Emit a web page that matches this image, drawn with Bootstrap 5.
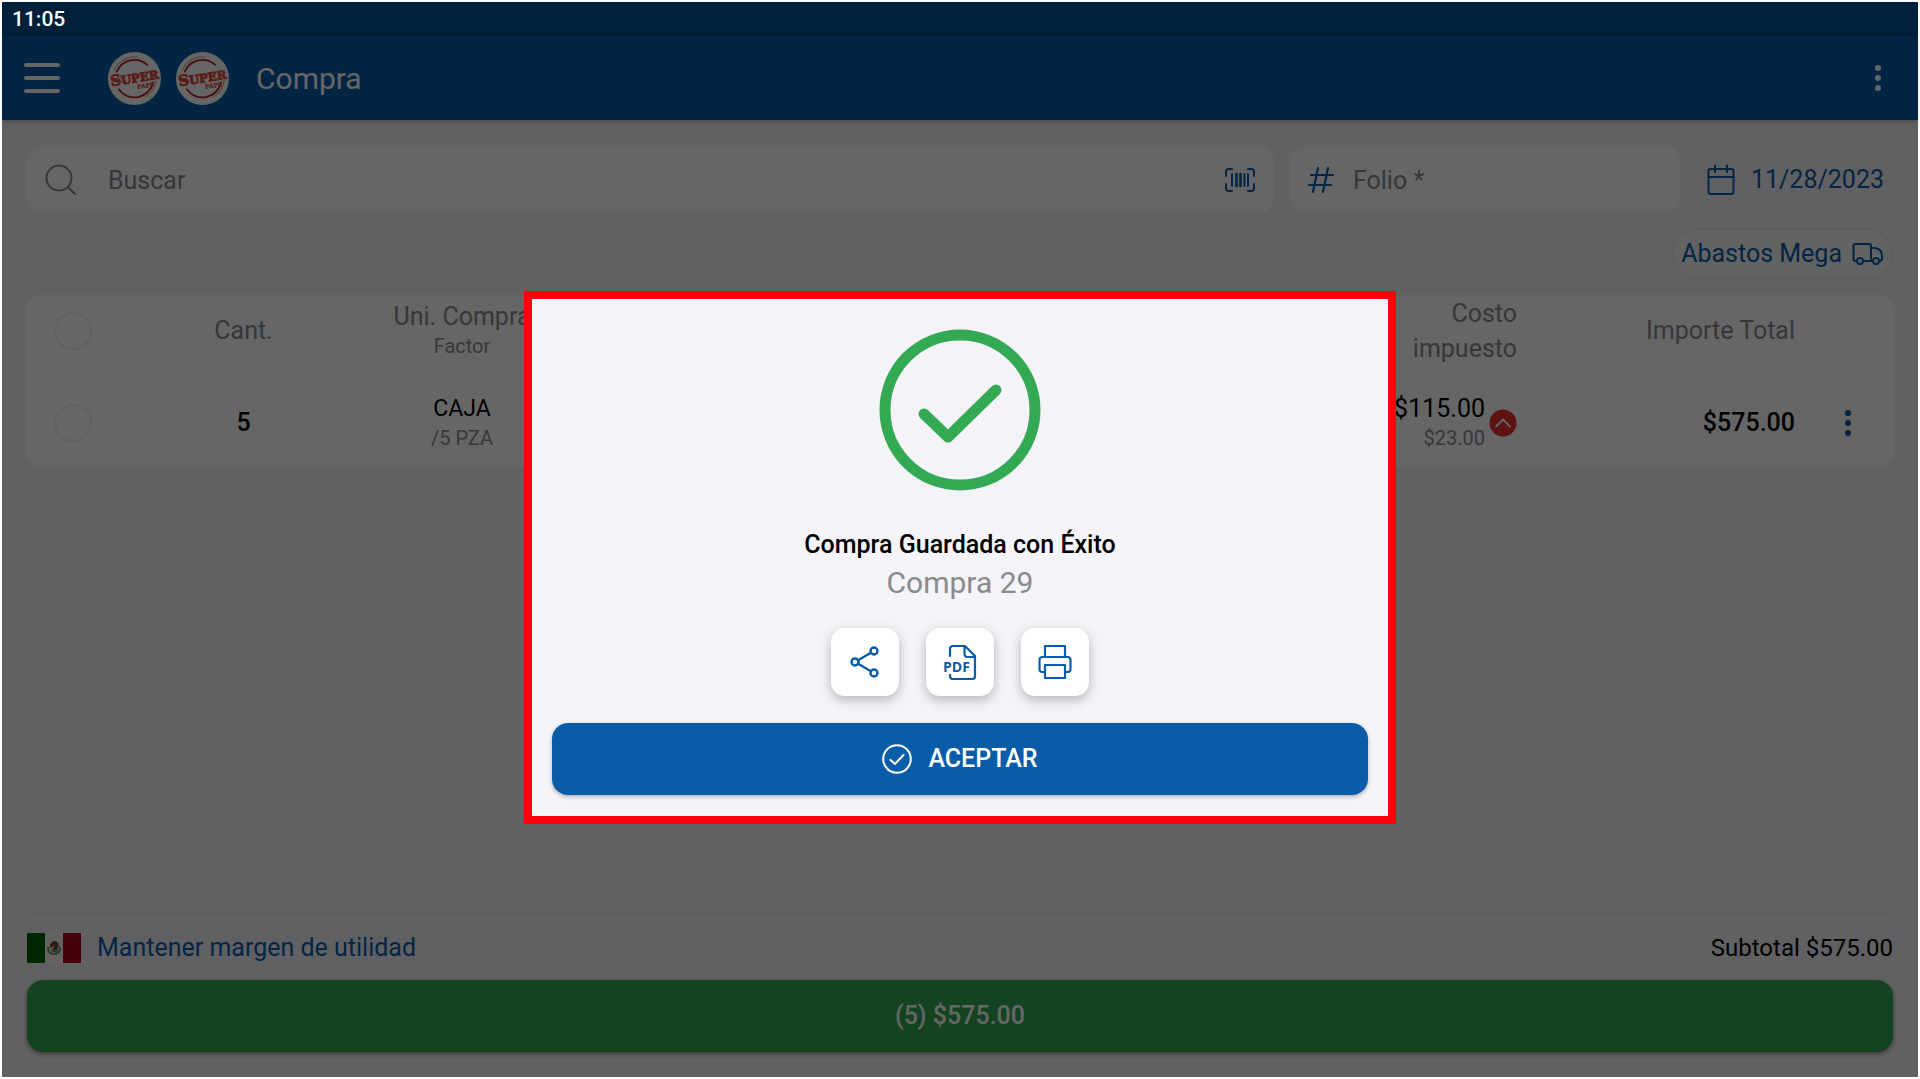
<!DOCTYPE html>
<html lang="es">
<head>
<meta charset="utf-8">
<meta name="viewport" content="width=device-width, initial-scale=1">
<title>Compra</title>
<link href="https://cdn.jsdelivr.net/npm/bootstrap@5.3.0/dist/css/bootstrap.min.css" rel="stylesheet">
<style>
  :root { --brand: #085ca8; --muted: #8a8a8e; --ok: #34a953; }
  body { font-family: Roboto, "Liberation Sans", sans-serif; font-size: 25px; line-height: 30px; padding: 2px; background: #fff; color: #000; }
  .screen { min-height: calc(100vh - 4px); background: #f3f3f8; overflow: hidden; }
  .statusbar { height: 34px; background: #005091; padding-left: 10px; }
  .clock { z-index: 1060; color: #fff; font-size: 21px; font-weight: 500; line-height: 34px; }
  .topbar { height: 84px; background: var(--brand); color: #fff; padding: 0 24px 0 22px; box-shadow: 0 1px 4px rgba(0,0,0,.3); }
  .topbar h1 { font-size: 30px; font-weight: 400; line-height: 36px; padding: 2px 0 0 27px; }
  .plain { border: 0; background: none; padding: 0; color: inherit; display: flex; }
  .logos { padding-left: 48px; gap: 15px; }
  .main-area { padding: 27px 25px 25px; }
  .brand { color: var(--brand); }
  .muted { color: var(--muted); }
  .field { height: 65px; background: #fff; border-radius: 14px; }
  .field-search { padding: 0 18px; gap: 31px; }
  .field-folio { flex: 0 0 390px; padding: 0 17px; gap: 18px; }
  .field input { border: 0; background: transparent; padding: 2px 0 0; width: 0; min-width: 0; outline: 0; }
  .field input::placeholder { color: var(--muted); opacity: 1; }
  .date { gap: 16px; padding: 0 9px 0 11px; }
  .supplier { height: 51px; background: #f7f7fa; border: 2px solid #ececf0; border-radius: 26px; padding: 0 7px; gap: 10px; }
  .items { background: #fff; border-radius: 14px; overflow: hidden; margin-top: 16px; }
  .items table { table-layout: fixed; width: 100%; }
  .items th { font-weight: 400; color: var(--muted); height: 72px; padding: 0; }
  .items td { height: 100px; padding: 12px 0 0; }
  .items .sub { display: block; font-size: 20px; line-height: 28px; color: var(--muted); }
  .items .tax { line-height: 35px; }
  .items .unit { font-size: 23px; }
  .strong { font-weight: 500; }
  .c-check { width: 92px; } .c-qty { width: 249px; } .c-unit { width: 188px; }
  .c-total { width: 278px; } .c-menu { width: 98px; }
  .items .menu-cell { padding-left: 8px; }
  .items .form-check-input { width: 38px; height: 38px; margin: 0; border: 2px solid #f0f0f2; border-radius: 50%; float: none; vertical-align: middle; }
  .footbar { border-top: 2px solid #e9e9ed; padding-top: 18px; }
  .subtotal { font-size: 24px; }
  .btn-pay, .btn-accept { height: 72px; border-radius: 16px; font-size: 25px; font-weight: 500; line-height: 30px; color: #fff; border: 0; }
  .btn-pay { background: var(--ok); margin-top: 17px; box-shadow: 0 2px 5px rgba(0,0,0,.4); }
  .shade { background: #000; opacity: .6; z-index: 1050; }
  .modal { --bs-modal-width: 872px; position: absolute; top: 36px; height: auto; bottom: 0; }
  .modal .modal-dialog { min-height: 100%; margin-top: 0; margin-bottom: 0; }
  .modal-content { background: #f3f3f8; border: 8px solid #ff000c; border-radius: 0; padding: 30px 20px 21px; }
  .modal-content h2 { font-size: 25px; font-weight: 500; line-height: 36px; margin: 36px 0 0; color: #000; }
  .order { font-size: 30px; line-height: 36px; margin: 2px 0 27px; }
  .actions { gap: 27px; margin-bottom: 27px; }
  .btn-tile { width: 68px; height: 68px; border-radius: 14px; background: #fff; color: var(--brand); box-shadow: 0 4px 12px rgba(0,0,0,.25); padding: 0; border: 0; }
  .btn-accept { background: var(--brand); gap: 16px; box-shadow: 0 2px 4px rgba(0,0,0,.25); }
  .btn-tile:hover { background: #fff; color: var(--brand); }
  svg { display: block; flex: none; }
  .ln { fill: none; stroke: currentColor; stroke-linecap: round; stroke-linejoin: round; }
</style>
<script src="https://cdn.jsdelivr.net/npm/bootstrap@5.3.0/dist/js/bootstrap.bundle.min.js"></script>
</head>
<body>
<div class="screen position-relative d-flex flex-column">
  <div class="statusbar"><span class="clock position-relative">11:05</span></div>

  <header class="topbar d-flex align-items-center">
    <button class="plain" type="button" aria-label="Menú">
      <svg class="ln" width="36" height="32" viewBox="0 0 36 32" stroke-width="4"><path d="M2 3H34M2 16H34M2 29H34"/></svg>
    </button>
    <div class="logos d-flex">
      <svg width="53" height="53" viewBox="0 0 54 54">
        <g id="logo">
          <circle cx="27" cy="27" r="27" fill="#fff"/>
          <g fill="none" stroke-linecap="round">
            <path d="M9 20A19.500 19.500 0 0 1 40 13M46 31A19.500 19.500 0 0 1 11 38" stroke="#b3201f" stroke-width="1.800"/>
            <path d="M6 19A22.500 22.500 0 0 1 30 5M49 29A22.500 22.500 0 0 1 38 46" stroke="#e08a7c" stroke-width="1"/>
          </g>
          <g transform="rotate(-9 27 27)" font-family="'DejaVu Serif',serif" font-weight="700" fill="#dc4a3c" stroke="#dc4a3c" text-anchor="middle">
            <text x="27" y="31" font-size="12" stroke-width="0.900"><tspan font-size="15">S</tspan>UPER</text>
            <text x="37" y="38" font-size="6" stroke-width="0.200">PAPE</text>
          </g>
        </g>
      </svg>
      <svg width="53" height="53" viewBox="0 0 54 54"><use href="#logo"/></svg>
    </div>
    <h1 class="mb-0 flex-grow-1">Compra</h1>
    <button class="plain px-2" type="button" aria-label="Más opciones"><svg width="16" height="28" viewBox="-4 0 16 28" fill="currentColor"><g id="dots"><circle cx="4" cy="4" r="3"/><circle cx="4" cy="14" r="3"/><circle cx="4" cy="24" r="3"/></g></svg></button>
  </header>

  <main class="main-area d-flex flex-column flex-grow-1">
    <div class="d-flex align-items-center">
      <div class="field field-search d-flex align-items-center flex-grow-1">
        <svg class="ln muted" width="32" height="32" viewBox="0 0 32 32" stroke-width="2"><circle cx="14" cy="14" r="12.500"/><path d="M23 23L30 30"/></svg>
        <input class="flex-grow-1" type="search" placeholder="Buscar" aria-label="Buscar">
        <button class="plain brand" type="button" aria-label="Escanear código">
          <svg class="ln" width="32" height="26" viewBox="0 0 32 26" stroke-width="2"><path d="M8 2H5Q2 2 2 5V9M24 2H27Q30 2 30 5V9M8 24H5Q2 24 2 21V17M24 24H27Q30 24 30 21V17M8 7V19M20.500 7V19M24 7V19"/><path d="M12.500 7V19M16.500 7V19" stroke-width="2.600"/></svg>
        </button>
      </div>
      <div class="field field-folio d-flex align-items-center ms-3">
        <svg class="ln brand" width="28" height="28" viewBox="0 0 28 28" stroke-width="2.200"><path d="M11 2L6 26M21 2L16 26M4 9H26M2 19H24"/></svg>
        <input class="flex-grow-1" type="text" placeholder="Folio *" aria-label="Folio">
      </div>
      <button class="plain brand date align-items-center ms-3" type="button">
        <svg class="ln" width="28" height="32" viewBox="0 0 28 32" stroke-width="2"><rect x="1.500" y="5" width="25" height="25" rx="2"/><path d="M1.500 13H26.500M8 1.500V8M20 1.500V8"/></svg>
        11/28/2023
      </button>
    </div>

    <div class="d-flex justify-content-end pt-3">
      <button class="supplier brand d-flex align-items-center" type="button">Abastos Mega
        <svg class="ln" width="32" height="24" viewBox="0 0 32 24" stroke-width="2"><path d="M5 19H3.500Q1.500 19 1.500 17V4Q1.500 2 3.500 2H17Q19 2 19 4V19H11M19 6H23Q30 7 30 14V17Q30 19 27 19M19 19H21"/><circle cx="8" cy="19" r="3"/><circle cx="24" cy="19" r="3"/></svg>
      </button>
    </div>

    <div class="items">
      <table>
        <colgroup><col class="c-check"><col class="c-qty"><col class="c-unit"><col><col class="c-total"><col class="c-menu"></colgroup>
        <thead>
          <tr>
            <th class="text-center"><input class="form-check-input" type="checkbox" aria-label="Seleccionar todo"></th>
            <th class="text-center" scope="col">Cant.</th>
            <th class="text-center text-nowrap" scope="col">Uni. Compra<span class="sub">Factor</span></th>
            <th class="text-end tax" scope="col">Costo<br>impuesto</th>
            <th class="text-end" scope="col">Importe Total</th>
            <th></th>
          </tr>
        </thead>
        <tbody>
          <tr>
            <td class="text-center"><input class="form-check-input" type="checkbox" aria-label="Seleccionar artículo"></td>
            <td class="text-center strong">5</td>
            <td class="text-center unit">CAJA<span class="sub">/5 PZA</span></td>
            <td>
              <div class="d-flex justify-content-end align-items-center gap-1">
                <div class="text-end">$115.00<span class="sub">$23.00</span></div>
                <svg width="28" height="28" viewBox="0 0 28 28"><circle cx="14" cy="14" r="13.500" fill="#e8302c"/><path d="M7 17.500L14 10.500L21 17.500" fill="none" stroke="#fff" stroke-width="1.800" stroke-linecap="round"/></svg>
              </div>
            </td>
            <td class="text-end strong">$575.00</td>
            <td class="menu-cell"><button class="plain brand mx-auto" type="button" aria-label="Opciones del artículo"><svg width="8" height="28" fill="currentColor"><use href="#dots"/></svg></button></td>
          </tr>
        </tbody>
      </table>
    </div>

    <div class="footbar mt-auto">
      <div class="d-flex align-items-center">
        <svg width="54" height="30" viewBox="0 0 54 30"><path d="M0 0H18V30H0Z" fill="#006000"/><path d="M18 0H36V30H18Z" fill="#f7f7f9"/><path d="M36 0H54V30H36Z" fill="#b00018"/><path d="M21 14Q21 21 27 21Q33 21 33 14" fill="none" stroke="#6f8a5a" stroke-width="2"/><path d="M23 15Q22 10 27 8Q31 8 32 13L29 18L25 16L28 13Z" fill="#6b4a2e"/><path d="M24 17L28 19L31 17" stroke="#4c8d8a" stroke-width="1.500" fill="none"/></svg>
        <a class="brand text-decoration-none ms-3" href="#">Mantener margen de utilidad</a>
        <span class="subtotal ms-auto">Subtotal $575.00</span>
      </div>
      <button class="btn btn-pay w-100" type="button">(5) $575.00</button>
    </div>
  </main>

  <div class="shade position-absolute top-0 start-0 w-100 h-100"></div>

  <div class="modal d-block" role="dialog" aria-modal="true" aria-labelledby="done">
    <div class="modal-dialog modal-dialog-centered">
      <div class="modal-content text-center">
        <svg class="mx-auto" width="162" height="162" viewBox="0 0 162 162" fill="none" stroke="#34a953" stroke-width="11" stroke-linecap="round" stroke-linejoin="round"><circle cx="81" cy="81" r="75"/><path d="M45 85L69 108L117 61"/></svg>
        <h2 id="done">Compra Guardada con Éxito</h2>
        <p class="order muted">Compra 29</p>
        <div class="actions d-flex justify-content-center">
          <button class="btn btn-tile d-flex align-items-center justify-content-center" type="button" aria-label="Compartir">
            <svg class="ln" width="32" height="34" viewBox="0 0 32 34" stroke-width="2.400"><circle cx="6" cy="17" r="3.500"/><circle cx="25" cy="6" r="3.500"/><circle cx="25" cy="28" r="3.500"/><path d="M9 15.200L22 7.800M9 18.800L22 26.200"/></svg>
          </button>
          <button class="btn btn-tile d-flex align-items-center justify-content-center" type="button" aria-label="PDF">
            <svg width="34" height="36" viewBox="0 0 34 36"><path class="ln" stroke-width="2.200" d="M7 12V5Q7 2 10 2H22L32 12V32Q32 35 29 35H10Q7 35 7 32V30M21.500 2V10Q21.500 13 24.500 13H32"/><path d="M0 15H27V30H0Z" fill="#fff"/><text x="0" y="28" font-family="'Open Sans',sans-serif" font-size="14" font-weight="700" fill="currentColor">PDF</text></svg>
          </button>
          <button class="btn btn-tile d-flex align-items-center justify-content-center" type="button" aria-label="Imprimir">
            <svg class="ln" width="34" height="36" viewBox="0 0 34 36" stroke-width="2.200"><path d="M7 13V2H27V13M7 28H4Q1.500 28 1.500 25V16Q1.500 13 4.500 13H29.500Q32.500 13 32.500 16V25Q32.500 28 30 28H27M7 21H27V34H7Z"/></svg>
          </button>
        </div>
        <button class="btn btn-accept w-100 d-flex align-items-center justify-content-center" type="button">
          <svg class="ln" width="30" height="30" viewBox="0 0 30 30" stroke-width="2"><circle cx="15" cy="15" r="13.800"/><path d="M8.500 16L13 20L21.500 11"/></svg>
          ACEPTAR
        </button>
      </div>
    </div>
  </div>
</div>
</body>
</html>
